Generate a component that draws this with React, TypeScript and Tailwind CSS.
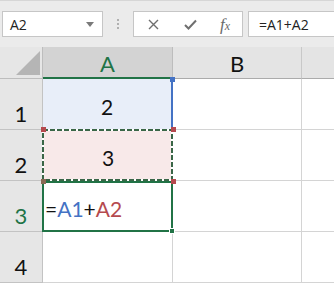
import React from 'react';

// Excel-like sheet: formula bar + 2 columns x 4 rows

const font = "font-['Lato','Open_Sans',sans-serif]";

const Corner = ({ className }: { className: string }) => (
  <div className={`absolute w-[5px] h-[5px] z-20 ${className}`} />
);

const DashedBox = () => (
  <svg className="absolute left-[-1px] top-[-1px] w-[131px] h-[52px] z-10 pointer-events-none" viewBox="0 0 131 52">
    <rect x="1" y="1" width="129" height="50" fill="none" stroke="#ffffff" strokeWidth="2" />
    <rect x="1" y="1" width="129" height="50" fill="none" stroke="#3a6647" strokeWidth="2" strokeDasharray="5 2" />
  </svg>
);

const rowHead = 'bg-[#e6e6e6] border-r border-b border-[#c3c3c3] flex items-end justify-center pb-[4px] leading-none text-[22px] text-[#111]';

const App: React.FC = () => {
  return (
    <div className={`w-[334px] h-[286px] overflow-hidden bg-white ${font}`}>
      {/* Formula bar */}
      <div className="h-[47px] bg-[#ebebeb] border-t border-[#d6d6d6] flex items-start pt-[10px] font-['Open_Sans',sans-serif]">
        <div className="ml-[2px] w-[101px] h-[26px] bg-white border border-[#c6c6c6] flex items-center justify-between pl-[7px] pr-[8px]">
          <span className="text-[14px] text-[#222]">A2</span>
          <svg width="8" height="5" viewBox="0 0 8 5"><path d="M0 0H8L4 5Z" fill="#7a7a7a" /></svg>
        </div>
        <div className="w-[30px] h-[26px] flex flex-col items-center justify-center gap-[2px]">
          <span className="w-[2px] h-[2px] bg-[#b0b0b0]" />
          <span className="w-[2px] h-[2px] bg-[#b0b0b0]" />
          <span className="w-[2px] h-[2px] bg-[#b0b0b0]" />
        </div>
        <div className="w-[110px] h-[26px] bg-white border border-[#c6c6c6] flex items-center">
          <svg className="ml-[14px]" width="11" height="11" viewBox="0 0 11 11">
            <path d="M1 1L10 10M10 1L1 10" stroke="#6f6f6f" strokeWidth="1.4" />
          </svg>
          <svg className="ml-[25px]" width="13" height="11" viewBox="0 0 13 11">
            <path d="M1 6L4.5 9.5L12 1.5" stroke="#6f6f6f" strokeWidth="2" fill="none" />
          </svg>
          <span className="ml-[23px] font-['Liberation_Serif',serif] italic text-[17px] text-[#6a6a6a] leading-none">
            f<span className="text-[12px]">x</span>
          </span>
        </div>
        <div className="ml-[5px] flex-1 h-[26px] bg-white border border-r-0 border-[#c6c6c6] flex items-center pl-[10px]">
          <span className="text-[14px] text-[#222]">=A1+A2</span>
        </div>
      </div>

      {/* Grid */}
      <div className="grid grid-cols-[43px_130px_129px_1fr] grid-rows-[32px_51px_51px_51px_51px]">
        {/* header row */}
        <div className="relative bg-[#e6e6e6] border-r border-b border-[#bdbdbd]">
          <svg className="absolute left-[16px] top-[4px]" width="24" height="24" viewBox="0 0 24 24">
            <path d="M24 0V24H0Z" fill="#b5b5b5" />
          </svg>
        </div>
        <div className="bg-[#d3d3d3] border-r border-[#bdbdbd] border-b-2 border-b-[#217346] flex items-center justify-center pt-[3px] text-[22px] text-[#217346]">
          A
        </div>
        <div className="bg-[#e4e4e4] border-r border-b border-[#ababab] border-r-[#c8c8c8] flex items-center justify-center pt-[2px] text-[22px] text-[#111]">
          B
        </div>
        <div className="bg-[#e4e4e4] border-b border-[#ababab]" />

        {/* row 1 */}
        <div className={rowHead}>1</div>
        <div className="relative bg-[#e8eef9] border-r-2 border-r-[#4472c4] flex items-center justify-center pt-[5px] text-[21px] text-[#111]">
          2
          <Corner className="bg-[#4472c4] right-[-4px] top-[-2px]" />
        </div>
        <div className="border-r border-b border-[#d4d4d4]" />
        <div className="border-b border-[#d4d4d4]" />

        {/* row 2 */}
        <div className={rowHead}>2</div>
        <div className="relative bg-[#f8e9e9] flex items-center justify-center pt-[5px] text-[21px] text-[#111]">
          3
          <DashedBox />
          <Corner className="bg-[#b5494e] left-[-2px] top-[-3px]" />
          <Corner className="bg-[#b5494e] right-[-3px] top-[-3px]" />
          <Corner className="bg-[#b5494e] right-[-3px] bottom-[-3px]" />
          <Corner className="bg-[#8a6a55] left-[-2px] bottom-[-3px] w-[3px] h-[3px]" />
        </div>
        <div className="border-r border-b border-[#d4d4d4]" />
        <div className="border-b border-[#d4d4d4]" />

        {/* row 3 */}
        <div className={`${rowHead} bg-[#d3d3d3] text-[#217346]`}>3</div>
        <div className="relative border-2 border-[#217346] ml-[-1px] flex items-center pl-[1px] pt-[5px] text-[21px]">
          <span className="text-[#111]">=</span>
          <span className="text-[#4472c4]">A1</span>
          <span className="text-[#111]">+</span>
          <span className="text-[#b5494e]">A2</span>
          <span className="absolute right-[-4px] bottom-[-4px] w-[6px] h-[6px] bg-[#217346] border border-white z-20" />
        </div>
        <div className="border-r border-b border-[#d4d4d4]" />
        <div className="border-b border-[#d4d4d4]" />

        {/* row 4 */}
        <div className={rowHead}>4</div>
        <div className="border-r border-b border-[#d4d4d4]" />
        <div className="border-r border-b border-[#d4d4d4]" />
        <div className="border-b border-[#d4d4d4]" />
      </div>
    </div>
  );
};

export default App;
